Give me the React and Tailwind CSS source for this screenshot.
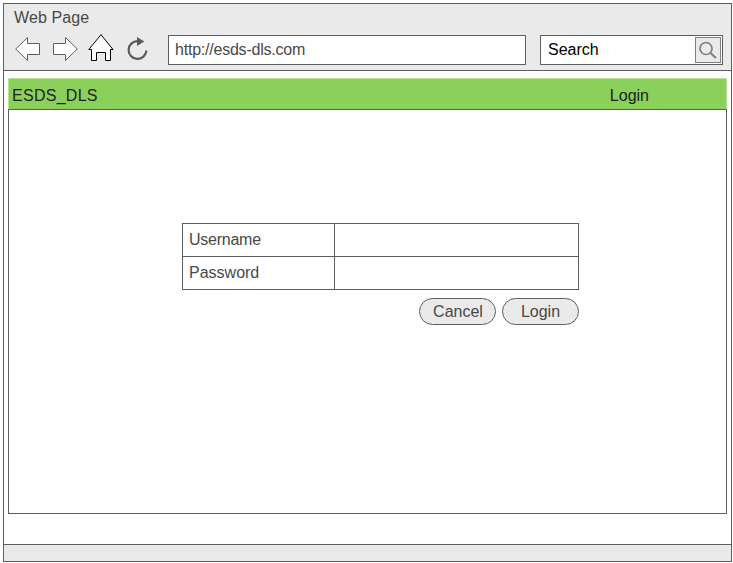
function ArrowLeft() {
  return (
    <svg width="25" height="25" viewBox="0 0 25 25" fill="#fff" stroke="#5e5e5e" strokeWidth="1">
      <path d="M.7 12 12.5.5V6.5H24.5V17.5H12.5V23.5Z" />
    </svg>
  );
}

function ArrowRight() {
  return (
    <svg width="25" height="25" viewBox="0 0 25 25" fill="#fff" stroke="#5e5e5e" strokeWidth="1">
      <path d="M24.3 12 12.5.5V6.5H.5V17.5H12.5V23.5Z" />
    </svg>
  );
}

function Home() {
  return (
    <svg width="26" height="28" viewBox="0 0 26 28" fill="#fff" stroke="#000" strokeWidth="1">
      <path d="M13 .7 25 15.5H22.5V26.5H17.5V18.5H8.5V26.5H3.5V15.5H.8Z" />
    </svg>
  );
}

function Refresh() {
  return (
    <svg width="22" height="25" viewBox="0 0 22 25">
      <path d="M11 4.1A8.9 8.9 0 1 0 19.4 13.5" fill="none" stroke="#5a5a5a" strokeWidth="2.2" />
      <path d="M10 0 17.3 4.4 10 9Z" fill="#5a5a5a" />
    </svg>
  );
}

function Magnifier() {
  return (
    <svg width="24" height="24" viewBox="0 0 24 24" fill="none" stroke="#808080">
      <circle cx="10" cy="10.5" r="6" strokeWidth="1.7" />
      <path d="M14.5 15 20 20" strokeWidth="2.2" />
    </svg>
  );
}

function Field({ children }) {
  return (
    <div className="flex h-[33px] border-b border-[#5e5e5e]">
      <div className="w-[152px] border-r border-[#5e5e5e] pl-1.5 leading-[32px]">{children}</div>
      <div className="flex-1" />
    </div>
  );
}

function PillButton({ children }) {
  return (
    <button className="h-[27px] w-[77px] rounded-full border border-[#5e5e5e] bg-[#eaeaea] text-center leading-[25px]">
      {children}
    </button>
  );
}

export default function App() {
  return (
    <div className="h-[563px] w-[733px] overflow-hidden bg-white pt-[3px] pl-[3px] font-['Liberation_Sans',Arial,sans-serif] text-[16px] text-[#484848]">
      <div className="flex h-[559px] w-[729px] flex-col border border-[#5e5e5e]">
        <header className="h-[67px] border-b border-[#5e5e5e] bg-[#eaeaea]">
          <div className="h-[30px] pl-2.5 leading-[27px]">
            <span className="tracking-[0.1px]">Web Page</span>
          </div>
          <div className="flex">
            <nav className="flex w-[164px] pl-[11px]">
              <div className="mt-[3px] w-[38px]"><ArrowLeft /></div>
              <div className="mt-[3px] w-[35px]"><ArrowRight /></div>
              <div className="w-[39px]"><Home /></div>
              <div className="mt-[3px]"><Refresh /></div>
            </nav>
            <div className="mt-px h-[30px] w-[358px] border border-[#5e5e5e] bg-white pl-1.5 leading-[28px] tracking-[-0.22px]">
              http://esds-dls.com
            </div>
            <div className="mt-px ml-3.5 flex h-[30px] w-[183px] justify-between border border-[#5e5e5e] bg-white pl-[7px] leading-[28px] text-black">
              <span>Search</span>
              <div className="mt-px mr-px h-[26px] w-[26px] border border-[#808080] bg-[#eaeaea]">
                <Magnifier />
              </div>
            </div>
          </div>
        </header>

        <main className="flex-1 px-1 pt-[7px]">
          <div className="flex h-[31px] w-[719px] justify-between border border-b-0 border-[#b9e29b] bg-[#8bd05b] pr-[77px] pl-[3px] leading-[34px] text-[#222]">
            <span className="tracking-[0.27px]">ESDS_DLS</span>
            <span>Login</span>
          </div>
          <section className="h-[405px] w-[719px] border border-[#5e5e5e] pt-[113px] pl-[173px]">
            <div className="w-[397px] border-x border-t border-[#5e5e5e]">
              <Field><span className="tracking-[-0.25px]">Username</span></Field>
              <Field>Password</Field>
            </div>
            <div className="mt-2 flex w-[397px] justify-end gap-1.5">
              <PillButton><span className="pl-px">Cancel</span></PillButton>
              <PillButton>Login</PillButton>
            </div>
          </section>
        </main>

        <footer className="h-[17px] border-t border-[#5e5e5e] bg-[#eaeaea]" />
      </div>
    </div>
  );
}
